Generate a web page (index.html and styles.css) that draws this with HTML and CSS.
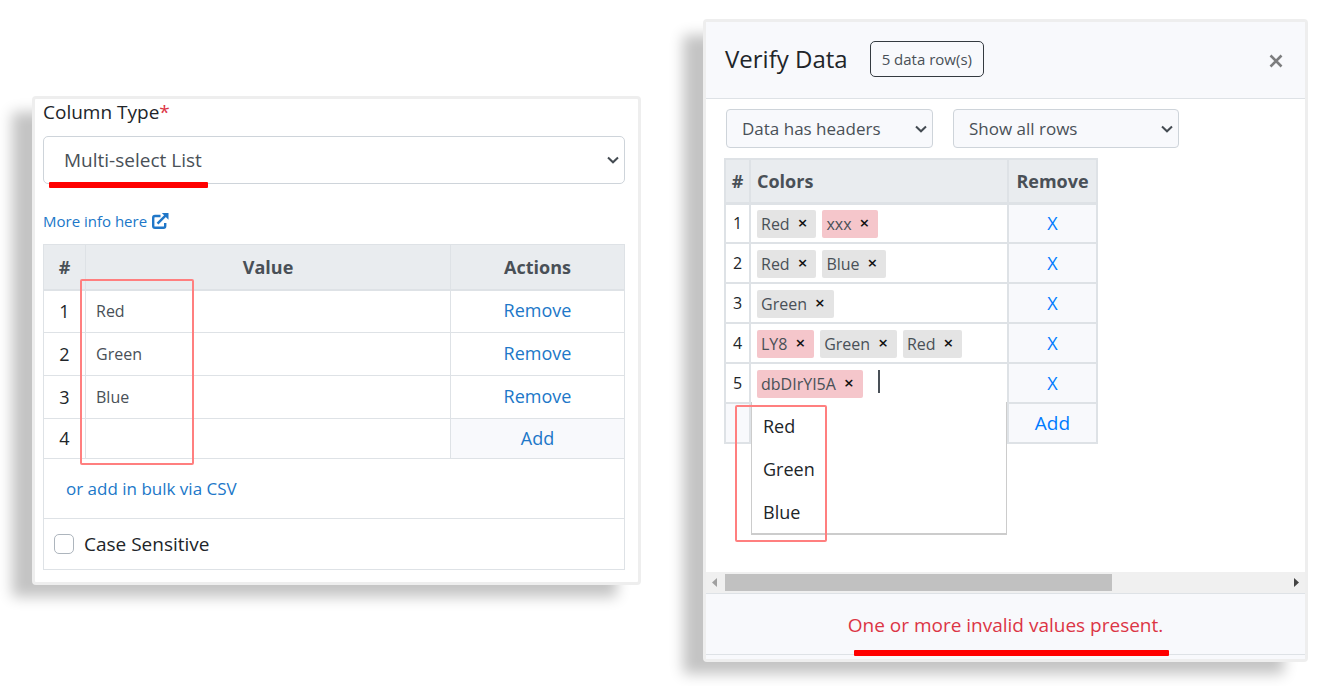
FILE: index.html
```html
<!DOCTYPE html>
<html lang="en">
<head>
<meta charset="utf-8">
<title>Multi-select List</title>
<link rel="stylesheet" href="styles.css">
</head>
<body>
<main class="page">
  <section class="card settings">
    <label class="field-label" for="column-type">Column Type<span class="required">*</span></label>
    <div class="select-box select-large">
      <select id="column-type"><option>Multi-select List</option></select>
      <svg class="chevron" viewBox="0 0 12 8"><path d="M1 1.500 6 6.300 11 1.500"/></svg>
      <span class="underline"></span>
    </div>
    <a class="info-link" href="#">More info here
      <svg class="external" viewBox="0 0 17 16"><path d="M8.500 3H3Q1.200 3 1.200 4.800V13Q1.200 14.800 3 14.800H11.500Q13.200 14.800 13.200 13V10"/><path d="M5.500 10.700 14 2.200"/><path class="solid" d="M9.800 0H16.500V6.700Z"/></svg>
    </a>
    <table class="values">
      <colgroup><col class="col-num"><col><col class="col-actions"></colgroup>
      <thead><tr><th>#</th><th>Value</th><th>Actions</th></tr></thead>
      <tbody>
        <tr><td class="num">1</td><td class="anchor"><input type="text" value="Red" aria-label="Value 1"><span class="outline outline-values"></span></td><td class="action"><a href="#">Remove</a></td></tr>
        <tr><td class="num">2</td><td><input type="text" value="Green" aria-label="Value 2"></td><td class="action"><a href="#">Remove</a></td></tr>
        <tr><td class="num">3</td><td><input type="text" value="Blue" aria-label="Value 3"></td><td class="action"><a href="#">Remove</a></td></tr>
        <tr class="new-row"><td class="num">4</td><td><input type="text" aria-label="Value 4"></td><td class="action shaded"><a href="#">Add</a></td></tr>
        <tr class="bulk-row"><td colspan="3"><a href="#">or add in bulk via CSV</a></td></tr>
        <tr class="case-row"><td colspan="3"><label class="check"><input type="checkbox">Case Sensitive</label></td></tr>
      </tbody>
    </table>
  </section>

  <section class="card verify">
    <header class="verify-head">
      <h1>Verify Data</h1>
      <button class="rows-button" type="button">5 data row(s)</button>
      <button class="close" type="button" aria-label="Close"><svg viewBox="0 0 14 14"><path d="M1.500 1.500 12.500 12.500M12.500 1.500 1.500 12.500"/></svg></button>
    </header>
    <div class="verify-body">
      <div class="filters">
        <div class="select-box select-headers">
          <select aria-label="Headers"><option>Data has headers</option></select>
          <svg class="chevron" viewBox="0 0 12 8"><path d="M1 1.500 6 6.300 11 1.500"/></svg>
        </div>
        <div class="select-box select-rows">
          <select aria-label="Rows"><option>Show all rows</option></select>
          <svg class="chevron" viewBox="0 0 12 8"><path d="M1 1.500 6 6.300 11 1.500"/></svg>
        </div>
      </div>
      <table class="data">
        <colgroup><col class="col-index"><col class="col-colors"><col class="col-remove"></colgroup>
        <thead><tr><th class="index">#</th><th class="colors">Colors</th><th>Remove</th></tr></thead>
        <tbody>
          <tr><td class="index">1</td><td><div class="tags"><span class="tag">Red<button type="button">×</button></span><span class="tag bad">xxx<button type="button">×</button></span></div></td><td class="remove"><a href="#">X</a></td></tr>
          <tr><td class="index">2</td><td><div class="tags"><span class="tag">Red<button type="button">×</button></span><span class="tag">Blue<button type="button">×</button></span></div></td><td class="remove"><a href="#">X</a></td></tr>
          <tr><td class="index">3</td><td><div class="tags"><span class="tag">Green<button type="button">×</button></span></div></td><td class="remove"><a href="#">X</a></td></tr>
          <tr><td class="index">4</td><td><div class="tags"><span class="tag bad">LY8<button type="button">×</button></span><span class="tag">Green<button type="button">×</button></span><span class="tag">Red<button type="button">×</button></span></div></td><td class="remove"><a href="#">X</a></td></tr>
          <tr><td class="index">5</td><td class="anchor"><div class="tags"><span class="tag bad">dbDIrYI5A<button type="button">×</button></span><span class="caret"></span></div>
            <ul class="menu"><li>Red</li><li>Green</li><li>Blue</li></ul><span class="outline outline-menu"></span></td><td class="remove"><a href="#">X</a></td></tr>
          <tr><td class="index shaded"></td><td></td><td class="remove add"><a href="#">Add</a></td></tr>
        </tbody>
      </table>
    </div>
    <div class="scrollbar">
      <svg class="arrow arrow-left" viewBox="0 0 5 9"><path d="M5 0V9L0 4.500Z"/></svg>
      <div class="track"><div class="thumb"></div></div>
      <svg class="arrow" viewBox="0 0 5 9"><path d="M0 0V9L5 4.500Z"/></svg>
    </div>
    <footer class="verify-foot">
      <p class="error">One or more invalid values present.<span class="underline underline-error"></span></p>
    </footer>
  </section>
</main>
</body>
</html>
```

FILE: styles.css
```css
* { box-sizing: border-box; }
body { margin: 0; background: #fff; color: #212529; font: 18px/26px "Open Sans", "Noto Sans", sans-serif; }
a { color: #2077c8; text-decoration: none; }
button, input, select { font: inherit; color: inherit; }
button { cursor: pointer; }
table { border-collapse: collapse; table-layout: fixed; }
th, td { padding: 0; }
.page { display: grid; grid-template-columns: 609fr 605fr; column-gap: 62px; align-items: start; padding: 19px 21px 24px 32px; }
.card { border: 3px solid #eee; border-radius: 4px; background: #fff; box-shadow: -22px 14px 14px -2px #c4c4c4; }
.anchor { position: relative; }

.settings { margin-top: 77px; padding: 0 13px 12px 8px; }
.field-label { display: block; font-size: 19px; }
.required { color: #dc3545; }
.select-box { position: relative; }
.select-box select { display: block; width: 100%; appearance: none; border: 1px solid #ced4da; border-radius: 4px; color: #495057; background: #f8f9fc; }
.chevron { position: absolute; right: 6px; top: 50%; width: 12px; height: 8px; margin-top: -4px; fill: none; stroke: #444b52; stroke-width: 2; pointer-events: none; }
.select-large { margin-top: 11px; }
.select-large select { height: 48px; padding: 0 20px; border-radius: 5px; background: #fff; font-size: 19px; }
.underline { position: absolute; height: 6px; border-radius: 1px; background: #f00; }
.select-large .underline { left: 6px; bottom: -4px; width: 159px; }
.info-link { display: flex; align-items: center; gap: 5px; margin-top: 24px; font-size: 15px; }
.external { width: 17px; height: 16px; fill: none; stroke: #2077c8; stroke-width: 2.400; }
.external .solid { fill: #2077c8; stroke: none; }

.values { width: 100%; margin-top: 10px; }
.values th, .values td { border: 1px solid #dee2e6; height: 43px; }
.values th { height: 45px; border-bottom-width: 2px; background: #e9ecef; color: #495057; }
.col-num { width: 42px; }
.col-actions { width: 174px; }
.num, .action { text-align: center; }
.values .action { padding-bottom: 2px; }
.values input[type="text"] { display: block; width: 100%; height: 40px; padding: 0 10px; border: 0; background: transparent; color: #495057; font-size: 16px; }
.values .new-row td { height: 40px; padding-bottom: 2px; }
.values .new-row input[type="text"] { height: 36px; }
.shaded { background: #f8f9fc; }
.values .bulk-row td { height: 60px; padding-left: 22px; font-size: 17px; }
.values .case-row td { height: 51px; padding-left: 10px; font-size: 19px; }
.check { display: flex; align-items: center; gap: 10px; }
.check input { appearance: none; width: 20px; height: 20px; margin: 0; border: 1px solid #adb5bd; border-radius: 5px; }
.outline { position: absolute; border: 2px solid #ff7f7f; border-radius: 2px; pointer-events: none; }
.outline-values { left: -6px; top: -12px; width: 114px; height: 186px; }

.verify-head { display: flex; align-items: center; height: 77px; padding: 0 21px 2px 19px; border-bottom: 1px solid #dee2e6; background: #f8f9fc; }
h1 { margin: 0; font-size: 24px; line-height: 32px; font-weight: 500; }
.rows-button { margin-left: 22px; height: 36px; padding: 0 11px; border: 1px solid #343a40; border-radius: 5px; background: transparent; color: #495057; font-size: 15px; }
.close { display: flex; margin-left: auto; padding: 4px 0 0; border: 0; background: none; }
.close svg { width: 16px; height: 14px; fill: none; stroke: #7c7d7e; stroke-width: 2.600; }
.verify-body { min-height: 473px; padding: 10px 20px 0 18px; }
.filters { display: flex; gap: 20px; padding-left: 2px; }
.filters select { height: 39px; padding: 0 15px; font-size: 17px; }
.select-headers { width: 207px; }
.select-rows { width: 226px; }
.data { width: 374px; margin-top: 10px; }
.data th, .data td { border: 2px solid #dee2e6; height: 40px; }
.data th { height: 44px; border-bottom-width: 3px; background: #e9ecef; color: #495057; }
.col-index { width: 25px; }
.col-remove { width: 89px; }
.data th.colors { padding-left: 6px; text-align: left; }
.index, .remove { text-align: center; }
td.index { font-size: 16px; }
.remove { background: #f8f9fc; }
.add { font-size: 19px; }
.remove a { color: #007bff; }
.tags { display: flex; gap: 6px; padding: 2px 0 0 6px; }
.tag { display: flex; align-items: center; height: 28px; padding: 0 9px 0 4px; border-radius: 2px; background: #e4e4e4; color: #495057; font-size: 16px; }
.tag.bad { background: #f5c6cb; }
.tag button { margin-left: 8px; padding: 0 0 2px; border: 0; background: none; color: #111; font-size: 17px; line-height: 20px; font-weight: 600; }
.caret { width: 2px; height: 23px; margin-left: 9px; background: #495057; }
.menu { position: absolute; z-index: 1; left: 0; right: 0; top: 100%; margin: 0; padding: 2px 0 0; list-style: none; border: 1px solid #ccc; border-top: 0; border-bottom-width: 2px; background: #fff; }
.menu li { padding: 9px 11px 8px; }
.outline-menu { z-index: 2; left: -16px; top: 41px; width: 92px; height: 137px; }
.scrollbar { display: flex; align-items: center; height: 21px; padding: 0 6px; background: #f0f0f0; }
.arrow { width: 5px; height: 9px; fill: #444; }
.arrow-left { fill: #a0a0a0; }
.track { flex: 1; margin: 0 8px; }
.thumb { width: 69%; height: 17px; background: #c1c1c1; }
.verify-foot { height: 66px; padding-top: 18px; border-top: 1px solid #dee2e6; background: linear-gradient(#dee2e6, #dee2e6) 0 60px / 100% 1px no-repeat #f8f9fc; }
.error { position: relative; width: max-content; margin: 0 auto; color: #dc3545; font-size: 19px; }
.underline-error { left: 6px; right: -6px; top: 38px; }
```
